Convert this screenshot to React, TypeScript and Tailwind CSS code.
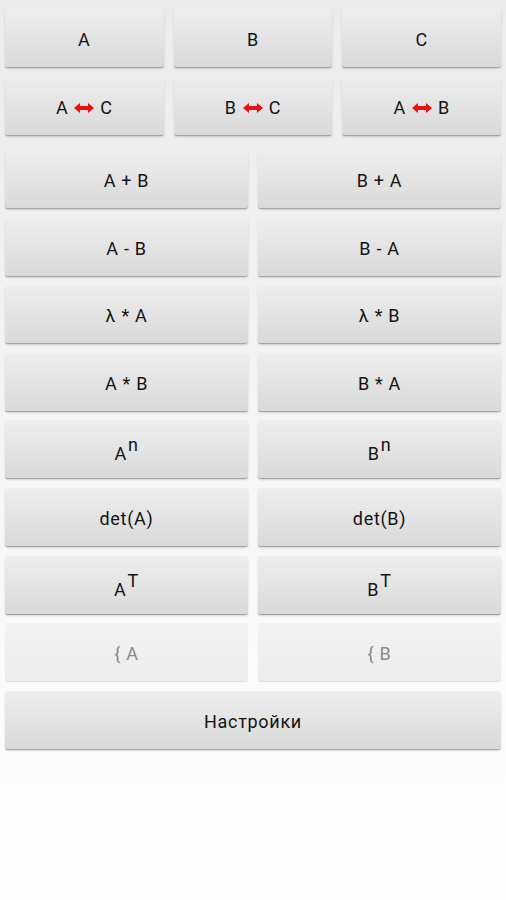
import React from "react";

const Arrow = () => (
  <svg width="20" height="10" viewBox="0 0 20 10" className="mx-[6px] inline-block">
    <polygon points="0,5 6,0 6,3 14,3 14,0 20,5 14,10 14,7 6,7 6,10" fill="#ee1111" />
  </svg>
);

const Btn = ({
  children,
  disabled,
  className = "",
}: {
  children: React.ReactNode;
  disabled?: boolean;
  className?: string;
}) => (
  <div
    className={`flex items-center justify-center rounded-[3px] pt-[3px] text-[18px] tracking-[0.7px] ${
      disabled
        ? "bg-gradient-to-b from-[#f3f3f3] to-[#ececec] text-[#8a8a8a] shadow-[0_1px_1px_rgba(0,0,0,0.12)]"
        : "bg-gradient-to-b from-[#eeeeee] to-[#d9d9d9] text-[#141414] shadow-[0_1px_0_#a5a5a5,0_2px_2px_rgba(0,0,0,0.15)]"
    } ${className}`}
  >
    {children}
  </div>
);

const Pow = ({ base, exp }: { base: string; exp: string }) => (
  <span className="relative top-[3px]">
    {base}
    <span className="relative -top-[9px] ml-[1px]">{exp}</span>
  </span>
);

export default function App() {
  const pairs: [React.ReactNode, React.ReactNode][] = [
    ["A + B", "B + A"],
    ["A - B", "B - A"],
    ["λ * A", "λ * B"],
    ["A * B", "B * A"],
    [<Pow base="A" exp="n" />, <Pow base="B" exp="n" />],
    ["det(A)", "det(B)"],
    [<Pow base="A" exp="T" />, <Pow base="B" exp="T" />],
  ];

  return (
    <div
      className="min-h-[900px] w-[506px] bg-gradient-to-b from-[#ebebeb] from-0% to-[#fefefe] to-[92%] px-[5px] pt-[9px]"
      style={{ fontFamily: "Roboto, 'Noto Sans', sans-serif" }}
    >
      <div className="grid grid-cols-3 gap-x-[10px] gap-y-[10px]">
        <Btn className="h-[58px]">A</Btn>
        <Btn className="h-[58px]">B</Btn>
        <Btn className="h-[58px]">C</Btn>
        <Btn className="h-[58px]">
          A<Arrow />C
        </Btn>
        <Btn className="h-[58px]">
          B<Arrow />C
        </Btn>
        <Btn className="h-[58px]">
          A<Arrow />B
        </Btn>
      </div>
      <div className="mt-[15px] grid grid-cols-2 gap-x-[10px] gap-y-[9.6px]">
        {pairs.map(([l, r], i) => (
          <React.Fragment key={i}>
            <Btn className="h-[58px]">{l}</Btn>
            <Btn className="h-[58px]">{r}</Btn>
          </React.Fragment>
        ))}
        <Btn disabled className="h-[58px]">
          {"{ A"}
        </Btn>
        <Btn disabled className="h-[58px]">
          {"{ B"}
        </Btn>
        <Btn className="col-span-2 h-[58px]">Настройки</Btn>
      </div>
    </div>
  );
}
